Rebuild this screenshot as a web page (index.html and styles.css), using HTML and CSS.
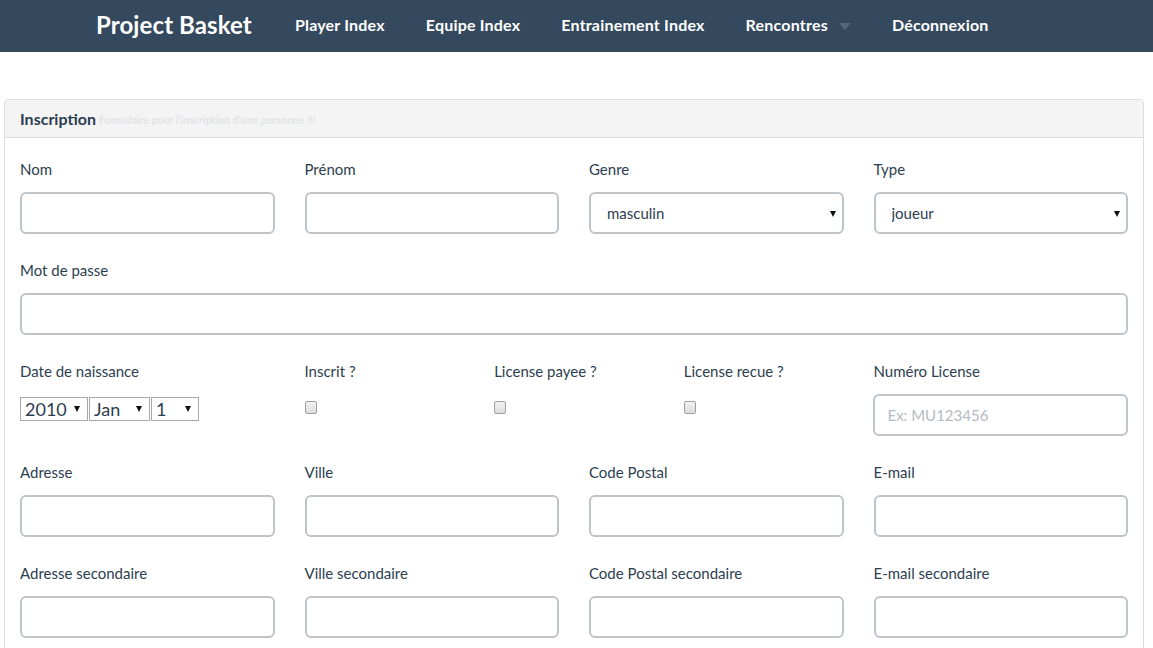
FILE: index.html
```html
<!DOCTYPE html>
<html lang="fr">
<head>
<meta charset="utf-8">
<title>Project Basket</title>
<link rel="stylesheet" href="styles.css">
</head>
<body>
<nav class="navbar">
  <a class="brand" href="#">Project Basket</a>
  <ul class="nav">
    <li><a href="#">Player Index</a></li>
    <li><a href="#">Equipe Index</a></li>
    <li><a href="#">Entrainement Index</a></li>
    <li><a href="#" class="dropdown">Rencontres <span class="caret"></span></a></li>
    <li><a href="#">Déconnexion</a></li>
  </ul>
</nav>

<div class="panel">
  <div class="panel-heading">
    <span class="panel-title">Inscription</span>
    <small class="panel-sub">Formulaire pour l'inscription d'une personne !!!</small>
  </div>
  <div class="panel-body">
    <div class="row">
      <div class="col"><label>Nom</label><input class="control" type="text"></div>
      <div class="col"><label>Prénom</label><input class="control" type="text"></div>
      <div class="col"><label>Genre</label>
        <span class="select-wrap"><select class="control select"><option>masculin</option><option>féminin</option></select></span>
      </div>
      <div class="col"><label>Type</label>
        <span class="select-wrap"><select class="control select"><option>joueur</option><option>entraîneur</option></select></span>
      </div>
    </div>
    <div class="row">
      <div class="col col-full"><label>Mot de passe</label><input class="control" type="password"></div>
    </div>
    <div class="row">
      <div class="col"><label>Date de naissance</label>
        <div class="date">
          <span class="mini-wrap w-year"><select class="mini"><option>2010</option></select></span>
          <span class="mini-wrap w-month"><select class="mini"><option>Jan</option></select></span>
          <span class="mini-wrap w-day"><select class="mini"><option>1</option></select></span>
        </div>
      </div>
      <div class="col col-third"><label>Inscrit ?</label><input class="check" type="checkbox"></div>
      <div class="col col-third"><label>License payee ?</label><input class="check" type="checkbox"></div>
      <div class="col col-third"><label>License recue ?</label><input class="check" type="checkbox"></div>
      <div class="col"><label>Numéro License</label><input class="control" type="text" placeholder="Ex: MU123456"></div>
    </div>
    <div class="row">
      <div class="col"><label>Adresse</label><input class="control" type="text"></div>
      <div class="col"><label>Ville</label><input class="control" type="text"></div>
      <div class="col"><label>Code Postal</label><input class="control" type="text"></div>
      <div class="col"><label>E-mail</label><input class="control" type="text"></div>
    </div>
    <div class="row">
      <div class="col"><label>Adresse secondaire</label><input class="control" type="text"></div>
      <div class="col"><label>Ville secondaire</label><input class="control" type="text"></div>
      <div class="col"><label>Code Postal secondaire</label><input class="control" type="text"></div>
      <div class="col"><label>E-mail secondaire</label><input class="control" type="text"></div>
    </div>
  </div>
</div>
</body>
</html>
```
FILE: styles.css
```css
* { box-sizing: border-box; }
html, body { margin: 0; padding: 0; }
body {
  font-family: Lato, "Open Sans", "Liberation Sans", sans-serif;
  font-size: 15px;
  color: #2c3e50;
  background: #fff;
  overflow: hidden;
  height: 648px;
}
a { text-decoration: none; color: inherit; }

.navbar {
  height: 52px;
  background: #34495e;
  display: flex;
  align-items: center;
  padding: 0 0 2px 96px;
}
.brand {
  color: #fff;
  font-size: 24px;
  font-weight: 700;
  letter-spacing: 0.1px;
  line-height: 50px;
  margin-right: 43px;
}
.nav {
  list-style: none;
  margin: 0;
  padding: 0;
  display: flex;
  gap: 41px;
}
.nav a {
  color: #fff;
  font-weight: 700;
  font-size: 16px;
  letter-spacing: 0.2px;
  line-height: 50px;
  display: flex;
  align-items: center;
}
.caret {
  display: inline-block;
  width: 0;
  height: 0;
  border-left: 6px solid transparent;
  border-right: 6px solid transparent;
  border-top: 7px solid #51677d;
  margin-left: 11px;
  margin-top: 3px;
}

.panel {
  margin: 47px 0 0 4px;
  width: 1140px;
  border: 1px solid #dddddd;
  border-radius: 4px;
}
.panel-heading {
  height: 38px;
  background: #f4f4f4;
  border-bottom: 1px solid #dddddd;
  border-radius: 3px 3px 0 0;
  padding: 0 15px;
  display: flex;
  align-items: center;
}
.panel-title {
  font-weight: 700;
  font-size: 16px;
  color: #2c3e50;
  margin-right: 3px;
}
.panel-sub {
  font-size: 10.5px;
  font-weight: 700;
  color: #e2e4e7;
  margin-top: 3px;
}
.panel-body {
  padding-top: 20px;
}

.row {
  display: flex;
}
.col {
  flex: 0 0 284.5px;
  padding: 0 15px;
  margin-bottom: 25px;
  display: flex;
  flex-direction: column;
  align-items: flex-start;
}
.col-full { flex: 1 1 auto; align-items: stretch; }
.col-third { flex: 0 0 189.66px; }

label {
  display: block;
  line-height: 22px;
  margin-bottom: 12px;
  font-size: 15px;
}

.control {
  display: block;
  width: 100%;
  height: 42px;
  border: 2px solid #bfc4c9;
  border-radius: 6px;
  background: #fff;
  padding: 0 12px;
  font-family: inherit;
  font-size: 15px;
  color: #2c3e50;
  outline: none;
}
.control::placeholder { color: #b3bcc4; }

.select-wrap {
  position: relative;
  display: block;
  width: 100%;
}
.select-wrap::after {
  content: "";
  position: absolute;
  right: 8px;
  top: 19px;
  border-left: 3px solid transparent;
  border-right: 3px solid transparent;
  border-top: 6px solid #111;
  pointer-events: none;
}
.select {
  appearance: none;
  -webkit-appearance: none;
  padding-left: 16px;
}

.date {
  display: flex;
  gap: 1px;
  padding-top: 3px;
}
.mini-wrap {
  position: relative;
  display: block;
}
.mini-wrap::after {
  content: "";
  position: absolute;
  right: 8px;
  top: 9px;
  border-left: 3px solid transparent;
  border-right: 3px solid transparent;
  border-top: 6px solid #111;
  pointer-events: none;
}
.w-year { width: 68px; }
.w-month { width: 61px; }
.w-day { width: 48px; }
.mini {
  appearance: none;
  -webkit-appearance: none;
  width: 100%;
  height: 24px;
  border: 1px solid #a9a9a9;
  border-radius: 0;
  background: #fff;
  font-family: inherit;
  font-size: 18px;
  color: #2c3e50;
  padding: 0 0 0 4px;
  line-height: 22px;
  outline: none;
}

.check {
  appearance: none;
  -webkit-appearance: none;
  display: block;
  width: 12px;
  height: 13px;
  margin: 7px 0 0 0;
  border: 1px solid #a0a0a0;
  border-radius: 2px;
  background: linear-gradient(#f2f2f2, #dcdcdc);
}
```
